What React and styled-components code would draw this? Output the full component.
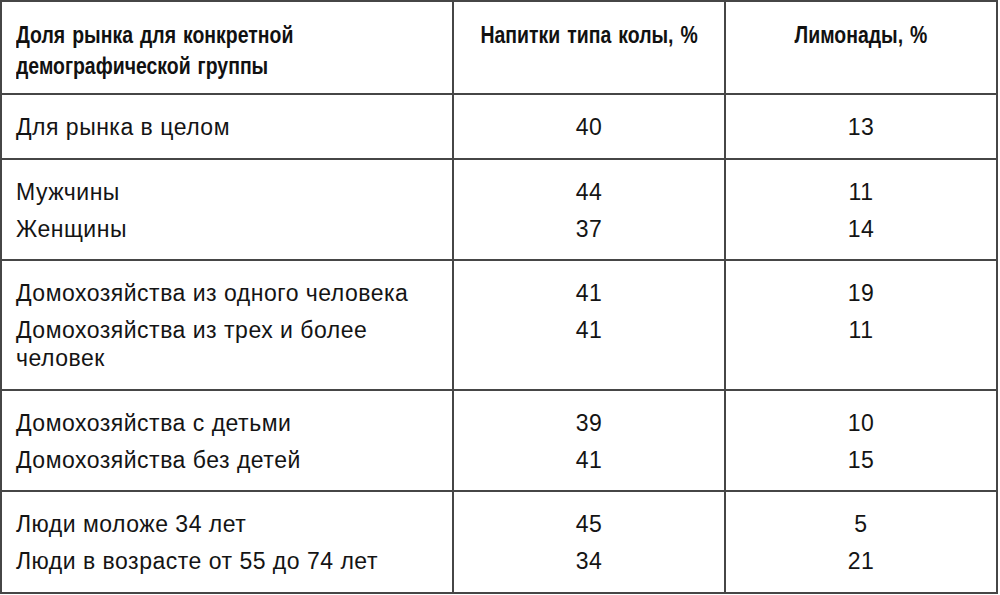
import React from "react";
import styled, { createGlobalStyle } from "styled-components";

const Global = createGlobalStyle`
  html, body { margin: 0; padding: 0; background: #ffffff; }
  body { font-family: "Liberation Sans", Arial, sans-serif; color: #141414; }
`;

const Table = styled.div`
  display: grid;
  grid-template-columns: 452px 272px 272px;
  width: 998px;
  border-left: 2px solid #464646;
  border-top: 2px solid #464646;
  box-sizing: border-box;
`;

const Cell = styled.div`
  box-sizing: border-box;
  border-right: 2px solid #464646;
  border-bottom: 2px solid #464646;
  padding: ${(p) => (p.$head ? "17px 14px 12px" : "18px 14px 16.5px")};
  text-align: ${(p) => (p.$center ? "center" : "left")};
  align-items: ${(p) => (p.$center ? "center" : "flex-start")};
  display: flex;
  flex-direction: column;
  gap: 9px;
`;

const HeadText = styled.div`
  font-family: "Liberation Sans", Arial, sans-serif;
  font-weight: 700;
  font-size: 24px;
  line-height: 31px;
  word-spacing: 2px;
  color: #111111;
  white-space: nowrap;
  transform: scaleX(0.81);
  transform-origin: ${(p) => (p.$center ? "center" : "left")} center;
`;

const Item = styled.div`
  font-family: "Liberation Sans", Arial, sans-serif;
  font-size: 23px;
  letter-spacing: 0.5px;
  line-height: 28px;
  color: #141414;
  white-space: nowrap;
`;

const groups = [
  [["Для рынка в целом", "40", "13"]],
  [
    ["Мужчины", "44", "11"],
    ["Женщины", "37", "14"],
  ],
  [
    ["Домохозяйства из одного человека", "41", "19"],
    [["Домохозяйства из трех и более", "человек"], "41", "11"],
  ],
  [
    ["Домохозяйства с детьми", "39", "10"],
    ["Домохозяйства без детей", "41", "15"],
  ],
  [
    ["Люди моложе 34 лет", "45", "5"],
    ["Люди в возрасте от 55 до 74 лет", "34", "21"],
  ],
];

export default function App() {
  return (
    <>
      <Global />
      <Table>
        <Cell $head>
          <HeadText>
            Доля рынка для конкретной
            <br />
            демографической группы
          </HeadText>
        </Cell>
        <Cell $head $center>
          <HeadText $center>Напитки типа колы, %</HeadText>
        </Cell>
        <Cell $head $center>
          <HeadText $center>Лимонады, %</HeadText>
        </Cell>
        {groups.map((g, gi) => (
          <React.Fragment key={gi}>
            <Cell>
              {g.map((r, i) => (
                <Item key={i}>
                  {Array.isArray(r[0]) ? (
                    <>
                      {r[0][0]}
                      <br />
                      {r[0][1]}
                    </>
                  ) : (
                    r[0]
                  )}
                </Item>
              ))}
            </Cell>
            <Cell $center>
              {g.map((r, i) => (
                <Item key={i}>{r[1]}</Item>
              ))}
            </Cell>
            <Cell $center>
              {g.map((r, i) => (
                <Item key={i}>{r[2]}</Item>
              ))}
            </Cell>
          </React.Fragment>
        ))}
      </Table>
    </>
  );
}
